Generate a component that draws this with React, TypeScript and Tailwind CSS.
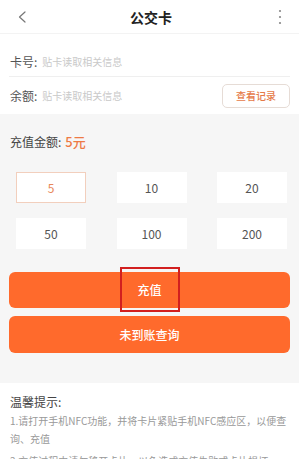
import { useState } from "react";

const AMOUNTS = [5, 10, 20, 50, 100, 200];

export default function App() {
  const [amount, setAmount] = useState(5);

  return (
    <div
      className="w-[299px] h-[459px] overflow-hidden bg-white text-[#333]"
      style={{ fontFamily: '"Noto Sans CJK SC", "Noto Sans", sans-serif' }}
    >
      {/* Header */}
      <div className="h-[34px] flex items-center justify-between px-[12px] border-b border-[#f3f3f3]">
        <button className="w-[20px] h-[20px] flex items-center justify-center">
          <svg width="10" height="12" viewBox="0 0 10 12" fill="none">
            <path d="M8 1L2.5 6L8 11" stroke="#777" strokeWidth="1.2" strokeLinecap="round" strokeLinejoin="round" />
          </svg>
        </button>
        <h1 className="text-[14px] font-bold text-[#222] leading-none">公交卡</h1>
        <button className="w-[20px] h-[20px] flex items-center justify-center -mr-[3px]">
          <svg width="4" height="16" viewBox="0 0 4 16" fill="#888">
            <circle cx="2" cy="2" r="1.1" />
            <circle cx="2" cy="8" r="1.1" />
            <circle cx="2" cy="14" r="1.1" />
          </svg>
        </button>
      </div>

      {/* Card info */}
      <div className="px-[9px] pt-[13px]">
        <div className="h-[30px] flex items-center border-b border-[#efefef] pl-[1px]">
          <span className="text-[12px] text-[#555]">卡号:</span>
          <span className="ml-[5px] text-[10px] text-[#c9c9c9]">贴卡读取相关信息</span>
        </div>
        <div className="h-[37px] flex items-center pl-[1px]">
          <span className="text-[12px] text-[#555]">余额:</span>
          <span className="ml-[5px] text-[10px] text-[#c9c9c9]">贴卡读取相关信息</span>
          <button className="ml-auto w-[68px] h-[24px] rounded-[5px] border border-[#e6dcd6] text-[10px] font-medium text-[#e57a48] flex items-center justify-center">
            查看记录
          </button>
        </div>
      </div>

      {/* Recharge */}
      <div className="bg-[#f6f6f6] pt-[14px] pb-[30px]">
        <div className="h-[28px] flex items-center px-[10px]">
          <span className="text-[12px] text-[#444]">充值金额:</span>
          <span className="ml-[4px] text-[13px] font-medium text-[#ee7a45]">{amount}元</span>
        </div>
        <div className="mt-[16px] pl-[16px] pr-[12px] flex flex-wrap justify-between gap-y-[15px]">
          {AMOUNTS.map((a) => (
            <button
              key={a}
              onClick={() => setAmount(a)}
              className={
                a === amount
                  ? "w-[70px] h-[31px] bg-white border border-[#f2cfbd] text-[12px] text-[#e8875a] flex items-center justify-center"
                  : "w-[70px] h-[31px] bg-white border border-white text-[12px] text-[#555] flex items-center justify-center"
              }
            >
              {a}
            </button>
          ))}
        </div>
        <div className="mt-[23px] px-[9px] flex flex-col gap-[8px]">
          <div className="relative">
            <button className="w-full h-[36px] rounded-[6px] bg-[#ff6a2c] text-white text-[12px] font-medium flex items-center justify-center">
              充值
            </button>
            <div className="absolute left-1/2 -translate-x-1/2 top-[-5px] w-[60px] h-[45px] border-2 border-[#d21f1f] pointer-events-none" />
          </div>
          <button className="w-full h-[37px] rounded-[6px] bg-[#ff6a2c] text-white text-[12px] font-medium flex items-center justify-center">
            未到账查询
          </button>
        </div>
      </div>

      {/* Tips */}
      <div className="px-[10px] pt-[11px]">
        <div className="text-[12px] leading-[15px] text-[#444]">温馨提示:</div>
        <p className="mt-[3px] text-[10px] leading-[18px] text-[#999]">
          1.请打开手机NFC功能，并将卡片紧贴手机NFC感应区，以便查询、充值
        </p>
        <p className="mt-[4px] text-[10px] leading-[18px] text-[#999]">
          2.充值过程中请勿移开卡片，以免造成充值失败或卡片损坏
        </p>
      </div>
    </div>
  );
}
